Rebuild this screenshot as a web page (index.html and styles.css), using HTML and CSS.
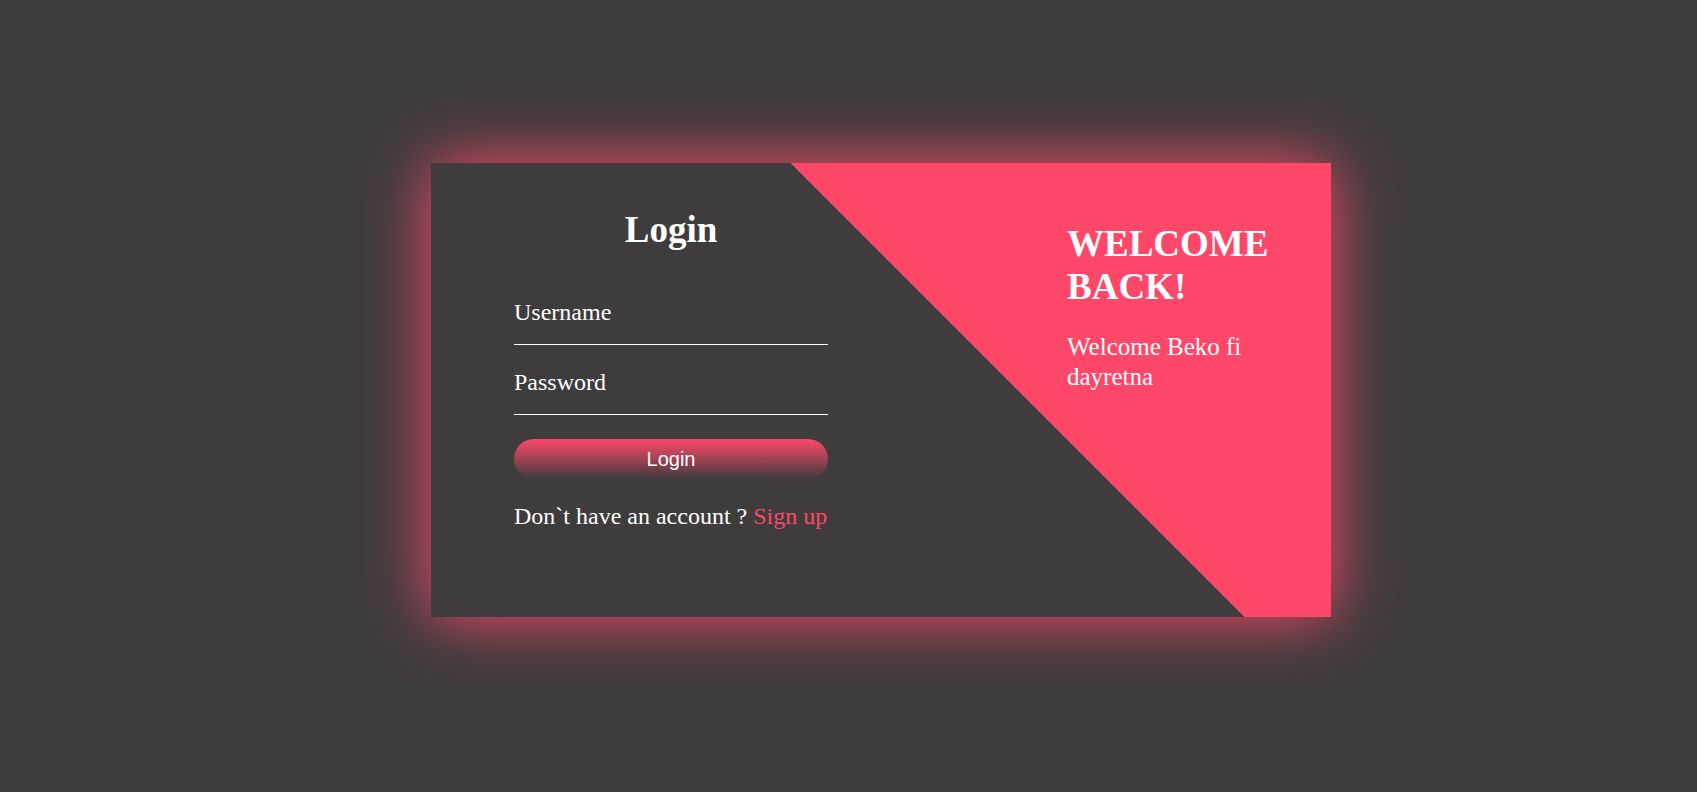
FILE: index.html
```html
<!DOCTYPE html>
<html lang="en">
<head>
<meta charset="utf-8">
<title>Login</title>
<link rel="stylesheet" href="styles.css">
</head>
<body>
<main class="page">
  <section class="card">
    <form class="login">
      <h2 class="login-title">Login</h2>
      <input class="field" type="text" placeholder="Username">
      <input class="field" type="password" placeholder="Password">
      <button class="btn" type="button">Login</button>
      <p class="signup">Don`t have an account ? <a href="#" class="signup-link">Sign up</a></p>
    </form>
    <div class="welcome">
      <h2 class="welcome-title">WELCOME BACK!</h2>
      <p class="welcome-text">Welcome Beko fi dayretna</p>
    </div>
  </section>
</main>
</body>
</html>
```

FILE: styles.css
```css
html, body {
  margin: 0;
  padding: 0;
  background: #3e3c3d;
  height: 100%;
}
body {
  font-family: "Liberation Serif", "Times New Roman", serif;
  font-variant-ligatures: none;
  color: #fff;
  overflow: hidden;
}
.page {
  display: flex;
  align-items: flex-start;
  padding: 163px 0 0 431px;
}
.card {
  display: flex;
  width: 900px;
  height: 454px;
  flex-shrink: 0;
  background: linear-gradient(45deg, #3e3c3d 60.05%, #ff4869 60.05%);
  box-shadow: 0 0 60px #ff4869;
}
.login {
  display: flex;
  flex-direction: column;
  width: 314px;
  margin-left: 83px;
  padding-top: 46px;
}
.login-title {
  margin: 0 0 47px;
  font-size: 37px;
  line-height: 42px;
  font-weight: bold;
  text-align: center;
}
.field {
  display: block;
  width: 100%;
  box-sizing: border-box;
  margin: 0 0 23px;
  padding: 0 0 18px;
  border: none;
  border-bottom: 1px solid #fff;
  background: transparent;
  color: #fff;
  font-family: "Liberation Serif", "Times New Roman", serif;
  font-variant-ligatures: none;
  font-size: 24px;
  line-height: 28px;
  height: 47px;
  outline: none;
}
.field::placeholder {
  color: #fff;
  opacity: 1;
}
.btn {
  display: block;
  width: 100%;
  height: 40px;
  margin-top: 1px;
  border: none;
  border-radius: 20px;
  background: linear-gradient(#ff4869, #3e3c3d);
  color: #fff;
  font-family: "Liberation Sans", Arial, sans-serif;
  font-size: 20px;
  cursor: pointer;
}
.signup {
  margin: 23px 0 0;
  font-size: 24px;
  line-height: 28px;
  white-space: nowrap;
}
.signup-link {
  color: #ff4869;
  text-decoration: none;
}
.welcome {
  width: 220px;
  margin-left: 239px;
  padding-top: 60px;
}
.welcome-title {
  margin: 0;
  font-size: 37px;
  line-height: 42.5px;
  font-weight: bold;
}
.welcome-text {
  margin: 23.5px 0 0;
  font-size: 25px;
  line-height: 30px;
}
```
